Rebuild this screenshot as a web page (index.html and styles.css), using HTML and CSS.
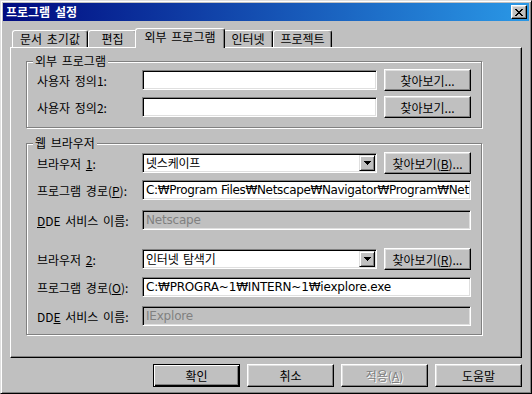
FILE: index.html
```html
<!doctype html>
<html>
<head>
<meta charset="utf-8">
<title>프로그램 설정</title>
<link rel="stylesheet" href="styles.css">
</head>
<body>
  <div class="window">
    <div class="titlebar">
      <span class="title">프로그램 설정</span>
      <div class="close">
        <svg width="8" height="7" viewBox="0 0 8 7" shape-rendering="crispEdges"><path d="M0 0h2v1H0z M6 0h2v1H6z M1 1h2v1H1z M5 1h2v1H5z M2 2h4v1H2z M3 3h2v1H3z M2 4h4v1H2z M1 5h2v1H1z M5 5h2v1H5z M0 6h2v1H0z M6 6h2v1H6z" fill="#000"/></svg>
      </div>
    </div>

    <div class="main">
      <div class="tabs">
        <div class="tab t1">문서 초기값</div>
        <div class="tab t2">편집</div>
        <div class="tab t3 selected">외부 프로그램</div>
        <div class="tab t4">인터넷</div>
        <div class="tab t5">프로젝트</div>
      </div>

      <div class="panel">
        <div class="group g1">
          <div class="group-title">외부 프로그램</div>
          <div class="row r1">
            <span class="label">사용자 정의1:</span>
            <div class="field"></div>
            <div class="btn">찾아보기...</div>
          </div>
          <div class="row r2">
            <span class="label">사용자 정의2:</span>
            <div class="field"></div>
            <div class="btn">찾아보기...</div>
          </div>
        </div>

        <div class="group g2">
          <div class="group-title">웹 브라우저</div>
          <div class="row b1">
            <span class="label">브라우저 <u>1</u>:</span>
            <div class="field select">
              <span class="value">넷스케이프</span>
              <div class="arrow"><svg width="7" height="4" viewBox="0 0 7 4" shape-rendering="crispEdges"><path d="M0 0h7v1H0z M1 1h5v1H1z M2 2h3v1H2z M3 3h1v1H3z" fill="#000"/></svg></div>
            </div>
            <div class="btn">찾아보기(<u>B</u>)...</div>
          </div>
          <div class="row p1">
            <span class="label">프로그램 경로(<u>P</u>):</span>
            <div class="field wide"><span class="value path">C:₩Program Files₩Netscape₩Navigator₩Program₩Net</span></div>
          </div>
          <div class="row d1">
            <span class="label"><u>D</u>DE 서비스 이름:</span>
            <div class="field wide disabled"><span class="value">Netscape</span></div>
          </div>
          <div class="row b2">
            <span class="label">브라우저 <u>2</u>:</span>
            <div class="field select">
              <span class="value">인터넷 탐색기</span>
              <div class="arrow"><svg width="7" height="4" viewBox="0 0 7 4" shape-rendering="crispEdges"><path d="M0 0h7v1H0z M1 1h5v1H1z M2 2h3v1H2z M3 3h1v1H3z" fill="#000"/></svg></div>
            </div>
            <div class="btn">찾아보기(<u>R</u>)...</div>
          </div>
          <div class="row p2">
            <span class="label">프로그램 경로(<u>O</u>):</span>
            <div class="field wide"><span class="value">C:₩PROGRA~1₩INTERN~1₩iexplore.exe</span></div>
          </div>
          <div class="row d2">
            <span class="label">DD<u>E</u> 서비스 이름:</span>
            <div class="field wide disabled"><span class="value">IExplore</span></div>
          </div>
        </div>
      </div>

      <div class="buttons">
        <div class="dlgbtn default">확인</div>
        <div class="dlgbtn">취소</div>
        <div class="dlgbtn disabled">적용(<u>A</u>)</div>
        <div class="dlgbtn">도움말</div>
      </div>
    </div>
  </div>
</body>
</html>
```

FILE: styles.css
```css
* {
  box-sizing: border-box;
}

html, body {
  margin: 0;
  padding: 0;
}

body {
  width: 532px;
  height: 394px;
  overflow: hidden;
  background: #c0c0c0;
  color: #000;
  font-family: "Noto Sans CJK KR", sans-serif;
  font-size: 12px;
  word-spacing: 2px;
}

u {
  text-decoration: underline;
  text-underline-offset: 1px;
}

/* window frame */
.window {
  display: flex;
  flex-direction: column;
  width: 532px;
  height: 394px;
  padding: 2px;
  border: 1px solid;
  border-color: #dfdfdf #000 #000 #dfdfdf;
  box-shadow: inset 1px 1px #fff, inset -1px -1px #808080;
  background: #c0c0c0;
}

.titlebar {
  display: flex;
  align-items: center;
  height: 18px;
  padding: 0 2px 0 3px;
  background: linear-gradient(to right, #000a80, #2a98e6);
  color: #fff;
  font-weight: bold;
  line-height: 18px;
}

.close {
  display: flex;
  align-items: center;
  justify-content: center;
  width: 16px;
  height: 14px;
  margin-left: auto;
  background: #c0c0c0;
  border: 1px solid;
  border-color: #fff #000 #000 #fff;
  box-shadow: inset -1px -1px #808080, inset 1px 1px #dfdfdf;
}

.main {
  padding: 7px 7px 0 7px;
}

/* tabs */
.tabs {
  display: flex;
  align-items: flex-end;
  height: 19px;
  padding-left: 2px;
}

.tab {
  height: 17px;
  border: 1px solid;
  border-bottom: 0;
  border-color: #fff #000 #000 #fff;
  border-radius: 3px 3px 0 0;
  box-shadow: inset -1px 0 #808080;
  background: #c0c0c0;
  text-align: center;
  line-height: 15px;
  white-space: nowrap;
}

.t1 { width: 76px; }
.t2 { width: 49px; }
.t3 { width: 90px; }
.t4 { width: 50px; }
.t5 { width: 59px; }

.tab.selected {
  position: relative;
  z-index: 1;
  height: 20px;
  margin: 0 -2px -1px -2px;
  line-height: 15px;
}

.panel {
  height: 311px;
  padding-left: 15px;
  border: 1px solid;
  border-color: #fff #000 #000 #fff;
  box-shadow: inset -1px -1px #808080;
}

/* group boxes */
.group {
  width: 456px;
  border: 1px solid #808080;
  box-shadow: inset 1px 1px #fff, 1px 1px #fff;
}

.g1 {
  margin-top: 13px;
  padding-bottom: 9px;
}

.g2 {
  margin-top: 15px;
  padding-bottom: 7px;
}

.group-title {
  width: fit-content;
  margin: -8px 0 0 6px;
  padding: 0 2px;
  background: #c0c0c0;
  line-height: 14px;
}

.row {
  display: flex;
  align-items: center;
  height: 22px;
  padding-left: 10px;
  white-space: nowrap;
}

.r1 { margin-top: 1px; }
.r2 { margin-top: 5px; }
.b1 { margin-top: 2px; }
.p1 { margin-top: 5px; }
.d1 { margin-top: 8px; }
.b2 { margin-top: 17px; }
.p2 { margin-top: 6px; }
.d2 { margin-top: 7px; }

.label {
  width: 105px;
}

.field {
  display: flex;
  align-items: center;
  width: 235px;
  height: 20px;
  padding: 0 2px 0 3px;
  overflow: hidden;
  border: 1px solid;
  border-color: #808080 #fff #fff #808080;
  box-shadow: inset 1px 1px #000, inset -1px -1px #dfdfdf;
  background: #fff;
  line-height: 16px;
}

.field .value {
  font-family: "DejaVu Sans", "Noto Sans CJK KR", sans-serif;
  font-size: 12px;
  letter-spacing: -0.2px;
  word-spacing: 0;
}

.field .value.path {
  letter-spacing: -0.35px;
}

.field.wide {
  width: 329px;
}

.field.disabled {
  background: #c0c0c0;
  color: #808080;
}

.field.select {
  justify-content: space-between;
  padding-right: 1px;
}

.select .value {
  font-family: "Noto Sans CJK KR", sans-serif;
  word-spacing: 2px;
}

.arrow {
  display: flex;
  align-items: center;
  justify-content: center;
  flex: 0 0 auto;
  width: 16px;
  height: 16px;
  border: 1px solid;
  border-color: #dfdfdf #000 #000 #dfdfdf;
  box-shadow: inset 1px 1px #fff, inset -1px -1px #808080;
  background: #c0c0c0;
}

/* buttons */
.btn,
.dlgbtn {
  display: flex;
  align-items: center;
  justify-content: center;
  border: 1px solid;
  border-color: #fff #000 #000 #fff;
  box-shadow: inset -1px -1px #808080, inset 1px 1px #dfdfdf;
  background: #c0c0c0;
  white-space: nowrap;
}

.btn {
  width: 87px;
  height: 22px;
  margin-left: 7px;
}

.buttons {
  display: flex;
  justify-content: flex-end;
  gap: 7px;
  margin-top: 6px;
}

.dlgbtn {
  width: 87px;
  height: 23px;
}

.dlgbtn.default {
  border-color: #000;
  box-shadow: inset 1px 1px #fff, inset -1px -1px #000, inset -2px -2px #808080;
}

.dlgbtn.disabled {
  color: #808080;
  text-shadow: 1px 1px #fff;
}
```
